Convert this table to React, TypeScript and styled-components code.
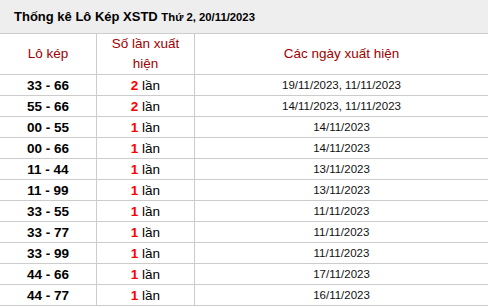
import React from 'react'
import styled, { createGlobalStyle } from 'styled-components'

interface Pair {
  pair: string
  count: number
  dates: string
}

const rows: Pair[] = [
  { pair: '33 - 66', count: 2, dates: '19/11/2023, 11/11/2023' },
  { pair: '55 - 66', count: 2, dates: '14/11/2023, 11/11/2023' },
  { pair: '00 - 55', count: 1, dates: '14/11/2023' },
  { pair: '00 - 66', count: 1, dates: '14/11/2023' },
  { pair: '11 - 44', count: 1, dates: '13/11/2023' },
  { pair: '11 - 99', count: 1, dates: '13/11/2023' },
  { pair: '33 - 55', count: 1, dates: '11/11/2023' },
  { pair: '33 - 77', count: 1, dates: '11/11/2023' },
  { pair: '33 - 99', count: 1, dates: '11/11/2023' },
  { pair: '44 - 66', count: 1, dates: '17/11/2023' },
  { pair: '44 - 77', count: 1, dates: '16/11/2023' },
]

const App: React.FC = () => {
  return (
    <>
      <GlobalStyle />
      <Wrapper>
        <Title>
          Thống kê Lô Kép XSTD <small>Thứ 2, 20/11/2023</small>
        </Title>
        <HeadRow>
          <HeadCell>Lô kép</HeadCell>
          <HeadCell>Số lần xuất hiện</HeadCell>
          <HeadCell>Các ngày xuất hiện</HeadCell>
        </HeadRow>
        {rows.map(r => (
          <Row key={r.pair}>
            <PairCell>{r.pair}</PairCell>
            <CountCell>
              <strong>{r.count}</strong> lần
            </CountCell>
            <DateCell>{r.dates}</DateCell>
          </Row>
        ))}
      </Wrapper>
    </>
  )
}

export default App

// Styles
const GlobalStyle = createGlobalStyle`
  body {
    margin: 0;
    background: #fff;
    font-family: "Liberation Sans", Arial, sans-serif;
  }
`

const Wrapper = styled.div`
  width: 488px;
  overflow: hidden;
`

const Title = styled.div`
  height: 33px;
  display: flex;
  align-items: center;
  padding-left: 14px;
  background: #eeeeee;
  border-bottom: 1px solid #cccccc;
  font-size: 13px;
  font-weight: bold;
  color: #000;
  white-space: pre;

  small {
    font-size: 11.3px;
  }
`

const Row = styled.div`
  display: grid;
  grid-template-columns: 97px 98px 1fr;
  height: 21px;
  border-bottom: 1px solid #cccccc;
  box-sizing: border-box;
`

const HeadRow = styled(Row)`
  height: 41px;
`

const Cell = styled.div`
  display: flex;
  align-items: center;
  justify-content: center;
  text-align: center;
  border-right: 1px solid #cccccc;
  color: #000;

  &:last-child {
    border-right: none;
  }
`

const HeadCell = styled(Cell)`
  padding: 0 6px;
  font-size: 13.5px;
  line-height: 20px;
  color: #a00000;
`

const PairCell = styled(Cell)`
  font-size: 13.5px;
  font-weight: bold;
`

const CountCell = styled(Cell)`
  font-size: 13.5px;
  white-space: pre;

  strong {
    color: #ff0000;
  }
`

const DateCell = styled(Cell)`
  font-size: 11.5px;
  color: #111;
`
